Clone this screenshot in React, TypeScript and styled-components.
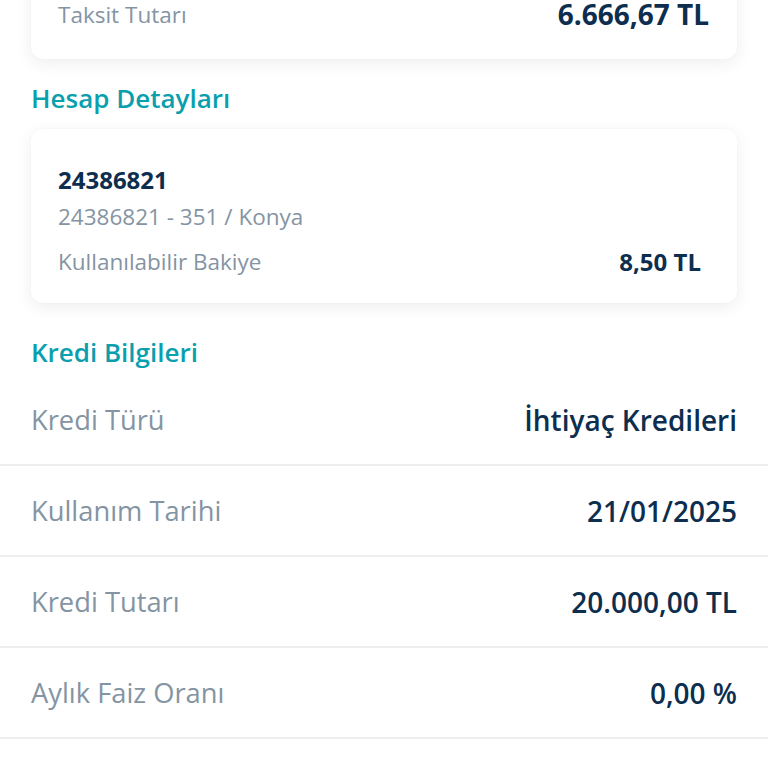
import React from "react"
import styled, { createGlobalStyle } from "styled-components"

const GlobalStyle = createGlobalStyle`
  html, body {
    margin: 0;
    padding: 0;
    background: #ffffff;
    overflow: hidden;
  }

  body {
    font-family: "Open Sans", "Liberation Sans", sans-serif;
    -webkit-font-smoothing: antialiased;
  }
`

const Page = styled.main`
  display: flex;
  flex-direction: column;
  width: 768px;
  margin-top: -31px;
`

const Card = styled.section<{ $padRight?: number }>`
  margin: 0 31px;
  padding: 28px ${p => p.$padRight ?? 28}px 28px 27px;
  background: #ffffff;
  border-radius: 12px;
  box-shadow: 0 4px 16px rgba(20, 40, 60, 0.08), 0 0 2px rgba(20, 40, 60, 0.04);
  display: flex;
  flex-direction: column;
`

const SummaryRow = styled.div`
  display: flex;
  align-items: center;
  justify-content: space-between;
  height: 34px;
`

const SummaryLabel = styled.span`
  font-size: 22.5px;
  color: #8494a3;
`

const SummaryValue = styled.span`
  font-size: 28px;
  font-weight: 700;
  color: #0d2e4e;
`

const SectionTitle = styled.h2<{ $top: number; $bottom: number }>`
  margin: ${p => p.$top}px 31px ${p => p.$bottom}px;
  font-size: 26px;
  line-height: 35px;
  font-weight: 600;
  color: #0a9fae;
`

const AccountCard = styled(Card)`
  padding-top: 34px;
  padding-bottom: 26px;
`

const AccountNo = styled.div`
  font-size: 24px;
  line-height: 33px;
  font-weight: 700;
  color: #0d2e4e;
`

const AccountSub = styled.div`
  margin-top: 5px;
  font-size: 22.5px;
  line-height: 31px;
  color: #8494a3;
`

const BalanceRow = styled.div`
  margin-top: 14px;
  display: flex;
  align-items: center;
  justify-content: space-between;
  line-height: 31px;
`

const BalanceLabel = styled.span`
  font-size: 22.5px;
  color: #8494a3;
`

const BalanceValue = styled.span`
  font-size: 24px;
  font-weight: 700;
  color: #0d2e4e;
`

const InfoList = styled.div`
  display: flex;
  flex-direction: column;
`

const InfoRow = styled.div`
  display: flex;
  align-items: center;
  justify-content: space-between;
  height: 89px;
  padding: 0 31px;
  border-bottom: 2px solid #eceef0;
`

const InfoLabel = styled.span`
  font-size: 27.3px;
  color: #8494a3;
`

const InfoValue = styled.span`
  font-size: 28px;
  font-weight: 600;
  color: #0d2e4e;
`

const creditInfo = [
  { label: "Kredi Türü", value: "İhtiyaç Kredileri" },
  { label: "Kullanım Tarihi", value: "21/01/2025" },
  { label: "Kredi Tutarı", value: "20.000,00 TL" },
  { label: "Aylık Faiz Oranı", value: "0,00 %" },
  { label: "Vade", value: "3 Ay" },
]

const App = (): React.ReactElement => {
  return (
    <>
      <GlobalStyle />
      <Page>
        <Card>
          <SummaryRow>
            <SummaryLabel>Taksit Tutarı</SummaryLabel>
            <SummaryValue>6.666,67 TL</SummaryValue>
          </SummaryRow>
        </Card>

        <SectionTitle $top={22} $bottom={13}>Hesap Detayları</SectionTitle>

        <AccountCard $padRight={36}>
          <AccountNo>24386821</AccountNo>
          <AccountSub>24386821 - 351 / Konya</AccountSub>
          <BalanceRow>
            <BalanceLabel>Kullanılabilir Bakiye</BalanceLabel>
            <BalanceValue>8,50 TL</BalanceValue>
          </BalanceRow>
        </AccountCard>

        <SectionTitle $top={32} $bottom={5}>Kredi Bilgileri</SectionTitle>

        <InfoList>
          {creditInfo.map(item => (
            <InfoRow key={item.label}>
              <InfoLabel>{item.label}</InfoLabel>
              <InfoValue>{item.value}</InfoValue>
            </InfoRow>
          ))}
        </InfoList>
      </Page>
    </>
  )
}

export default App
